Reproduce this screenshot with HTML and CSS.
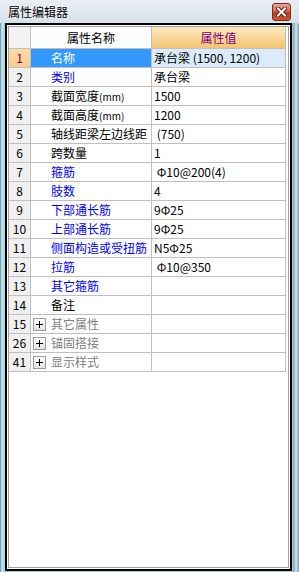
FILE: index.html
```html
<!DOCTYPE html>
<html lang="zh">
<head>
    <meta charset="UTF-8">
    <title>属性编辑器</title>
    <link rel="stylesheet" href="styles.css">
</head>
<body>

<div class="window">
    <!-- Заголовок окна -->
    <div class="titlebar">
        <span class="title">属性编辑器</span>
        <button class="close">
            <svg width="11" height="10" viewBox="0 0 11 10">
                <path d="M2 1.5 L9 8.5 M9 1.5 L2 8.5" stroke="#5a1f12" stroke-width="4" stroke-linecap="square"/>
                <path d="M2 1.5 L9 8.5 M9 1.5 L2 8.5" stroke="#fff" stroke-width="2" stroke-linecap="square"/>
            </svg>
        </button>
    </div>

    <!-- Таблица свойств -->
    <div class="frame">
        <div class="panel">
            <div class="grid">
                <div class="row head">
                    <div class="cell corner"></div>
                    <div class="cell hd-name">属性名称</div>
                    <div class="cell hd-val">属性值</div>
                </div>
                <div class="row sel">
                    <div class="cell num">1</div>
                    <div class="cell name">名称</div>
                    <div class="cell val">承台梁 (1500, 1200)</div>
                </div>
                <div class="row">
                    <div class="cell num">2</div>
                    <div class="cell name blue">类别</div>
                    <div class="cell val">承台梁</div>
                </div>
                <div class="row">
                    <div class="cell num">3</div>
                    <div class="cell name">截面宽度<span class="unit">(mm)</span></div>
                    <div class="cell val">1500</div>
                </div>
                <div class="row">
                    <div class="cell num">4</div>
                    <div class="cell name">截面高度<span class="unit">(mm)</span></div>
                    <div class="cell val">1200</div>
                </div>
                <div class="row">
                    <div class="cell num">5</div>
                    <div class="cell name">轴线距梁左边线距</div>
                    <div class="cell val"> (750)</div>
                </div>
                <div class="row">
                    <div class="cell num">6</div>
                    <div class="cell name">跨数量</div>
                    <div class="cell val">1</div>
                </div>
                <div class="row">
                    <div class="cell num">7</div>
                    <div class="cell name blue">箍筋</div>
                    <div class="cell val"> Φ10@200(4)</div>
                </div>
                <div class="row">
                    <div class="cell num">8</div>
                    <div class="cell name blue">肢数</div>
                    <div class="cell val">4</div>
                </div>
                <div class="row">
                    <div class="cell num">9</div>
                    <div class="cell name blue">下部通长筋</div>
                    <div class="cell val">9Φ25</div>
                </div>
                <div class="row">
                    <div class="cell num">10</div>
                    <div class="cell name blue">上部通长筋</div>
                    <div class="cell val">9Φ25</div>
                </div>
                <div class="row">
                    <div class="cell num">11</div>
                    <div class="cell name blue">侧面构造或受扭筋</div>
                    <div class="cell val">N5Φ25</div>
                </div>
                <div class="row">
                    <div class="cell num">12</div>
                    <div class="cell name blue">拉筋</div>
                    <div class="cell val"> Φ10@350</div>
                </div>
                <div class="row">
                    <div class="cell num">13</div>
                    <div class="cell name blue">其它箍筋</div>
                    <div class="cell val"></div>
                </div>
                <div class="row">
                    <div class="cell num">14</div>
                    <div class="cell name">备注</div>
                    <div class="cell val"></div>
                </div>
                <div class="row">
                    <div class="cell num">15</div>
                    <div class="cell name group"><span class="plus"></span>其它属性</div>
                    <div class="cell val"></div>
                </div>
                <div class="row">
                    <div class="cell num">26</div>
                    <div class="cell name group"><span class="plus"></span>锚固搭接</div>
                    <div class="cell val"></div>
                </div>
                <div class="row">
                    <div class="cell num">41</div>
                    <div class="cell name group"><span class="plus"></span>显示样式</div>
                    <div class="cell val"></div>
                </div>
            </div>
        </div>
    </div>
</div>

</body>
</html>
```

FILE: styles.css
```css
* {
    margin: 0;
    padding: 0;
    box-sizing: border-box;
}

body, html {
    width: 299px;
    height: 572px;
    overflow: hidden;
    font-family: "Noto Sans CJK SC", sans-serif;
    font-size: 12px;
}

/* Окно */
.window {
    height: 572px;
    display: flex;
    flex-direction: column;
    background: linear-gradient(to right, #4f8e9c 0, #d4ecf0 2px, #a4d3dc 4px, #a4d3dc 292px, #8aa9b6 294px, #d6e6ec 296px, #7c9cab 299px);
}

/* Заголовок */
.titlebar {
    height: 23px;
    display: flex;
    align-items: center;
    background: linear-gradient(#e9eef4, #d7e1ea);
}

.titlebar .title {
    padding-left: 8px;
    color: #000;
    text-shadow: 0 0 4px #fff;
}

.titlebar .close {
    align-self: flex-start;
    margin: 3px 8px 0 auto;
    width: 19px;
    height: 18px;
    border: 1px solid #7b2a1a;
    border-radius: 3px;
    background: linear-gradient(#eba99a, #d6654d 45%, #c13a1d 55%, #cb5534);
    display: flex;
    align-items: center;
    justify-content: center;
}

/* Рамка */
.frame {
    flex: 1;
    margin: 0 7px 1px 5px;
    border: 2px solid #000;
    padding: 1px;
    background: #fff;
}

.panel {
    height: 100%;
    border: 1px solid #a0a0a0;
    background: #fff;
}

/* Сетка свойств */
.grid {
    display: grid;
    grid-template-columns: 22px 121px 134px;
    grid-template-rows: 22px;
    grid-auto-rows: 19px;
}

.row {
    display: contents;
}

.cell {
    border-right: 1px solid #c0c0c0;
    border-bottom: 1px solid #c0c0c0;
    line-height: 18px;
    white-space: pre;
    overflow: hidden;
    color: #000;
}

.head .cell {
    line-height: 21px;
    text-align: center;
}

.head .corner {
    background: #f3f3f3;
}

.head .hd-name {
    background: #fcfcfc;
}

.head .hd-val {
    background: linear-gradient(#fdeac2, #f4c46e);
    color: #800080;
}

.num {
    background: #f0f0f0;
    text-align: center;
}

.name {
    padding-left: 20px;
}

.name .unit {
    font-size: 10px;
}

.val {
    padding-left: 2px;
}

.blue {
    color: #0000ff;
}

/* Выделенная строка */
.sel .num {
    background: linear-gradient(#fcdcaa, #f8cd8c);
    color: #800040;
}

.sel .name {
    background: #3399ff;
    color: #fff;
}

.sel .val {
    background: #dcebfa;
}

/* Группы */
.name.group {
    padding-left: 2px;
    display: flex;
    align-items: center;
    color: #808080;
}

.plus {
    position: relative;
    width: 13px;
    height: 13px;
    margin-right: 5px;
    border: 1px solid #9c9c9c;
    background: linear-gradient(#fff, #e2e2e2);
}

.plus::before, .plus::after {
    content: "";
    position: absolute;
    background: #000;
}

.plus::before {
    left: 2px;
    top: 5px;
    width: 7px;
    height: 1px;
}

.plus::after {
    left: 5px;
    top: 2px;
    width: 1px;
    height: 7px;
}
```
